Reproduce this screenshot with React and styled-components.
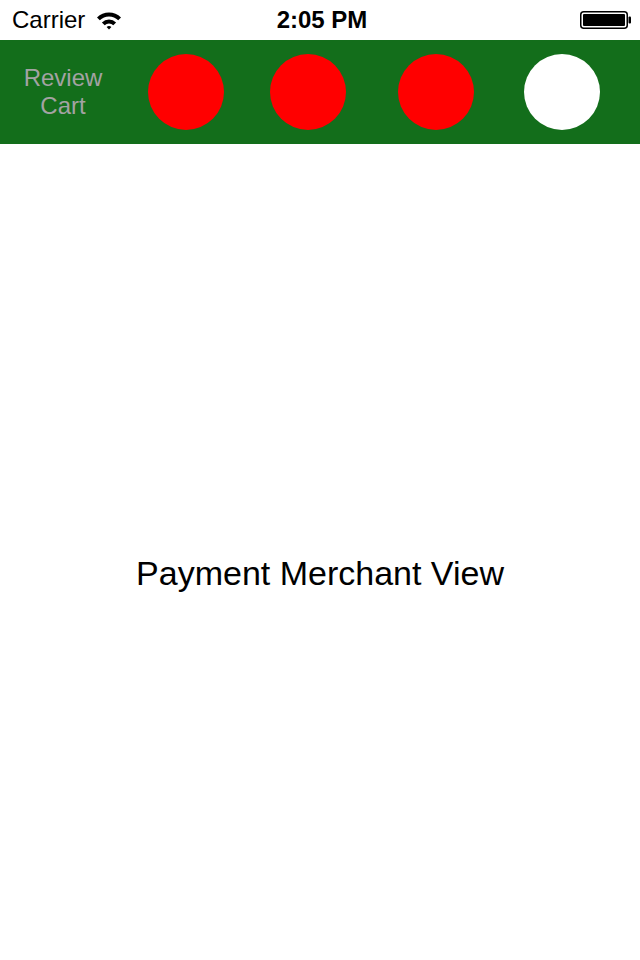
import React from "react";
import styled, { createGlobalStyle } from "styled-components";

const GlobalStyle = createGlobalStyle`
  html, body {
    margin: 0;
    padding: 0;
    background: #ffffff;
    font-family: "Liberation Sans", Arial, sans-serif;
  }
`;

const Screen = styled.div`
  width: 640px;
  height: 960px;
  display: flex;
  flex-direction: column;
  background: #ffffff;
  overflow: hidden;
`;

const StatusBar = styled.div`
  height: 40px;
  display: grid;
  grid-template-columns: 1fr auto 1fr;
  align-items: center;
  padding: 0 8px 0 12px;
  color: #000;
  font-size: 24px;
`;

const Left = styled.div`
  display: flex;
  align-items: center;
  gap: 11px;
`;

const Time = styled.div`
  font-weight: bold;
`;

const Right = styled.div`
  display: flex;
  justify-content: flex-end;
  align-items: center;
`;

const Steps = styled.div`
  height: 104px;
  background: #136e1b;
  display: flex;
  align-items: center;
`;

const StepLabel = styled.div`
  width: 126px;
  text-align: center;
  color: #a3a3a3;
  font-size: 24px;
  line-height: 28px;
`;

const Dot = styled.div`
  width: 76px;
  height: 76px;
  border-radius: 50%;
  flex-shrink: 0;
  margin-left: ${(p) => p.$offset}px;
  background: ${(p) => (p.$done ? "#ff0000" : "#ffffff")};
`;

const Body = styled.div`
  flex: 1;
  display: flex;
  justify-content: center;
  padding-top: 409px;
`;

const Title = styled.div`
  font-size: 34px;
  line-height: 40px;
  color: #000;
`;

const Wifi = () => (
  <svg width="26" height="20" viewBox="0 0 26 20">
    <path d="M1 7.5 A17 17 0 0 1 25 7.5 L22.2 10.3 A13 13 0 0 0 3.8 10.3 Z" fill="#000" />
    <path d="M5.9 12.4 A10 10 0 0 1 20.1 12.4 L17.3 15.2 A6 6 0 0 0 8.7 15.2 Z" fill="#000" />
    <path d="M10.6 17.1 A3.4 3.4 0 0 1 15.4 17.1 L13 19.5 Z" fill="#000" />
  </svg>
);

const Battery = () => (
  <svg width="52" height="18" viewBox="0 0 52 18">
    <rect x="0.75" y="0.75" width="46.5" height="16.5" rx="3" fill="none" stroke="#000" strokeWidth="1.5" />
    <rect x="3" y="3" width="42" height="12" rx="1" fill="#000" />
    <rect x="48.5" y="5.5" width="2.5" height="7" rx="1" fill="#000" />
  </svg>
);

const steps = [
  { offset: 22, done: true },
  { offset: 46, done: true },
  { offset: 52, done: true },
  { offset: 50, done: false },
];

const App = () => {
  return (
    <Screen>
      <GlobalStyle />
      <StatusBar>
        <Left>
          <span>Carrier</span>
          <Wifi />
        </Left>
        <Time>2:05 PM</Time>
        <Right>
          <Battery />
        </Right>
      </StatusBar>
      <Steps>
        <StepLabel>
          Review
          <br />
          Cart
        </StepLabel>
        {steps.map((s, i) => (
          <Dot key={`step-${i}`} $offset={s.offset} $done={s.done} />
        ))}
      </Steps>
      <Body>
        <Title>Payment Merchant View</Title>
      </Body>
    </Screen>
  );
};

export default App;
